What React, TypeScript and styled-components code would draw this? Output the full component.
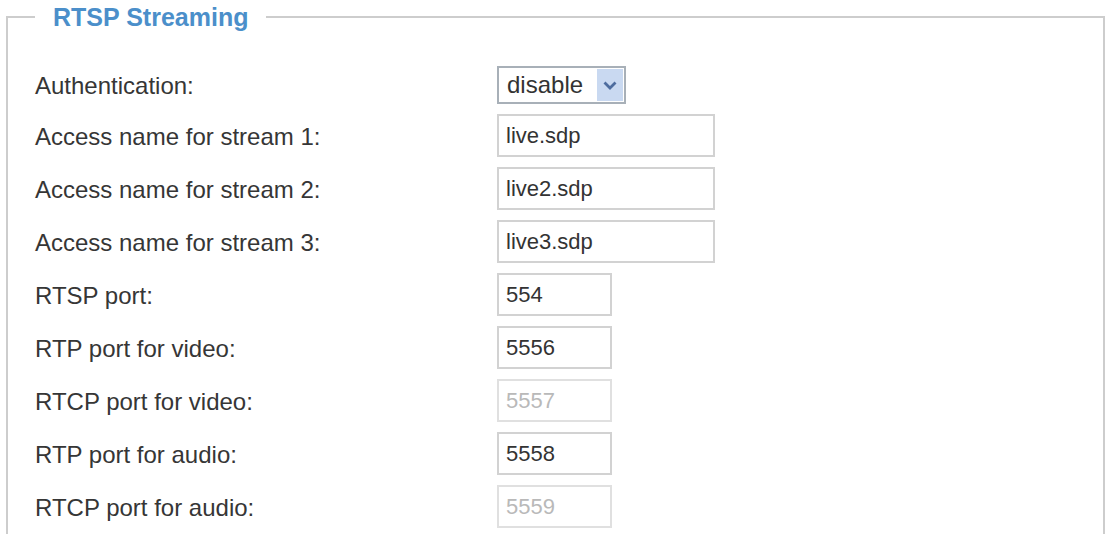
import React from 'react';
import styled, { createGlobalStyle } from 'styled-components';

const GlobalStyle = createGlobalStyle`
  html, body {
    margin: 0;
    padding: 0;
    background: #ffffff;
    overflow: hidden;
  }
  body {
    font-family: "Liberation Sans", Arial, sans-serif;
  }
`;

const Panel = styled.fieldset`
  margin: 2px 1px 0 6px;
  padding: 34px 27px 40px 27px;
  border: 2px solid #cdcdcd;
  border-bottom: none;
  min-height: 560px;
`;

const Legend = styled.legend`
  padding: 0 18px;
  font-size: 25px;
  line-height: 30px;
  font-weight: bold;
  color: #4b8fca;
`;

const Form = styled.div`
  display: flex;
  flex-direction: column;
  gap: 10px;
`;

const Row = styled.div`
  display: grid;
  grid-template-columns: 462px auto;
  align-items: center;
`;

const Label = styled.span`
  font-size: 24px;
  color: #363636;
  padding-top: 2px;
`;

const Field = styled.input<{ $wide?: boolean }>`
  box-sizing: border-box;
  width: ${(p) => (p.$wide ? '218px' : '115px')};
  height: 43px;
  padding: 0 7px;
  border: 2px solid #d2d2d2;
  background: #fff;
  font-family: "Liberation Sans", Arial, sans-serif;
  font-size: 22px;
  color: #333;
  outline: none;

  &:disabled {
    color: #b9b9b9;
    border-color: #e0e0e0;
  }
`;

const SelectBox = styled.div`
  box-sizing: border-box;
  width: 129px;
  height: 38px;
  display: flex;
  align-items: stretch;
  justify-content: space-between;
  border: 2px solid #a8b0b8;
  padding: 1px;
  background: #fff;
`;

const SelectValue = styled.span`
  display: flex;
  align-items: center;
  padding-left: 7px;
  font-size: 24px;
  color: #333;
`;

const ArrowBox = styled.span`
  width: 26px;
  display: flex;
  align-items: center;
  justify-content: center;
  background: #c9d9f1;
`;

const Chevron = () => (
  <svg width="14" height="9" viewBox="0 0 14 9">
    <path d="M1.5 1.5 L7 7 L12.5 1.5" fill="none" stroke="#4d6c9e" strokeWidth="2.8" />
  </svg>
);

type Port = { label: string; value: string; disabled?: boolean };

const streams: Port[] = [
  { label: 'Access name for stream 1:', value: 'live.sdp' },
  { label: 'Access name for stream 2:', value: 'live2.sdp' },
  { label: 'Access name for stream 3:', value: 'live3.sdp' },
];

const ports: Port[] = [
  { label: 'RTSP port:', value: '554' },
  { label: 'RTP port for video:', value: '5556' },
  { label: 'RTCP port for video:', value: '5557', disabled: true },
  { label: 'RTP port for audio:', value: '5558' },
  { label: 'RTCP port for audio:', value: '5559', disabled: true },
];

export default function App() {
  return (
    <>
      <GlobalStyle />
      <Panel>
        <Legend>RTSP Streaming</Legend>
        <Form>
          <Row>
            <Label>Authentication:</Label>
            <SelectBox>
              <SelectValue>disable</SelectValue>
              <ArrowBox>
                <Chevron />
              </ArrowBox>
            </SelectBox>
          </Row>
          {streams.map((s) => (
            <Row key={s.label}>
              <Label>{s.label}</Label>
              <Field $wide defaultValue={s.value} />
            </Row>
          ))}
          {ports.map((p) => (
            <Row key={p.label}>
              <Label>{p.label}</Label>
              <Field defaultValue={p.value} disabled={p.disabled} />
            </Row>
          ))}
        </Form>
      </Panel>
    </>
  );
}
